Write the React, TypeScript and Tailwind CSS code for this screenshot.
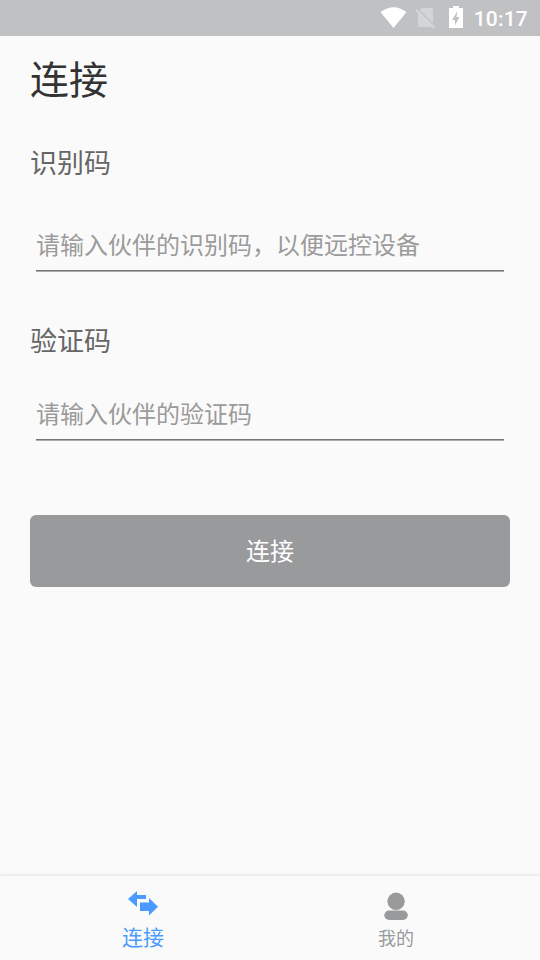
type FieldProps = {
  label: string;
  placeholder: string;
  className: string;
  inputClassName: string;
};

function Field({ label, placeholder, className, inputClassName }: FieldProps) {
  return (
    <label className={`block ${className}`}>
      <span className="block text-[27px] leading-[40px] text-[#666666]">{label}</span>
      <span className={`block px-1.5 ${inputClassName}`}>
        <input
          type="text"
          placeholder={placeholder}
          className="block w-full h-[53px] pb-px border-b border-[#757575] shadow-[0_1px_0_#acacac] text-2xl placeholder:text-[#9b9b9b] outline-none"
        />
      </span>
    </label>
  );
}

function StatusBar() {
  return (
    <header className="h-9 shrink-0 bg-[#bfc1c3] flex items-center justify-end pr-3 text-white">
      <svg width="90" height="36" viewBox="380 0 90 36" fill="currentColor">
        <path d="M380.500 12Q393.500 2.500 406.500 12L393.500 28Z" />
        <path d="M422 8H431.500Q433 8 433 9.500V27H419.500Q418 27 418 25.500V12Z" fill="#d2d4d5" />
        <path d="M417.500 9L436 27" stroke="#bfc1c3" strokeWidth="1.500" />
        <path d="M416 10L434.500 28" stroke="#d6d7d8" strokeWidth="2" />
        <path
          fillRule="evenodd"
          d="M453 6H459V8H463V28H449V8H453ZM457.500 11L452 20H455V25.500L459.500 17H456.500Z"
        />
      </svg>
      <span className="w-[58px] pt-[3px] text-right text-[21px] tracking-[0.2px] font-medium font-[Roboto,sans-serif]">
        10:17
      </span>
    </header>
  );
}

function TransferIcon() {
  return (
    <svg width="30" height="26" viewBox="0 0 30 26" fill="currentColor">
      <path d="M0 9L9 1V5H18V9H9V17Z" />
      <path d="M12 12.500H21V8L30 16.800L21 25.500V21H12Z" />
    </svg>
  );
}

function PersonIcon() {
  return (
    <svg width="24" height="28" viewBox="0 0 24 28" fill="currentColor">
      <circle cx="12.100" cy="9.300" r="8.700" />
      <rect x="0.300" y="18.500" width="23.500" height="9.500" rx="4.750" />
    </svg>
  );
}

export default function App() {
  return (
    <div className="w-[540px] h-[960px] flex flex-col bg-[#fafafa] font-['Noto_Sans_CJK_SC',sans-serif]">
      <StatusBar />
      <main className="flex-1 px-[30px]">
        <h1 className="pt-[13px] text-[39px] leading-[56px] text-[#333333]">连接</h1>
        <Field
          label="识别码"
          placeholder="请输入伙伴的识别码，以便远控设备"
          className="mt-[37px]"
          inputClassName="mt-9"
        />
        <Field
          label="验证码"
          placeholder="请输入伙伴的验证码"
          className="mt-[49px]"
          inputClassName="mt-[27px]"
        />
        <button className="mt-[75px] w-full h-[72px] pb-0.5 rounded-md bg-[#999a9c] text-2xl text-white">
          连接
        </button>
      </main>
      <nav className="h-[84px] shrink-0 flex pl-4 pr-[18px] shadow-[0_-1px_3px_rgba(0,0,0,0.1)]">
        <a className="flex-1 pt-3.5 flex flex-col items-center text-[#4a9aff]">
          <TransferIcon />
          <span className="mt-[5px] pl-px text-[21px] leading-[30px]">连接</span>
        </a>
        <a className="flex-1 pt-4 flex flex-col items-center text-[#999a9c]">
          <PersonIcon />
          <span className="mt-1 pl-px text-lg leading-[26px]">我的</span>
        </a>
      </nav>
    </div>
  );
}
